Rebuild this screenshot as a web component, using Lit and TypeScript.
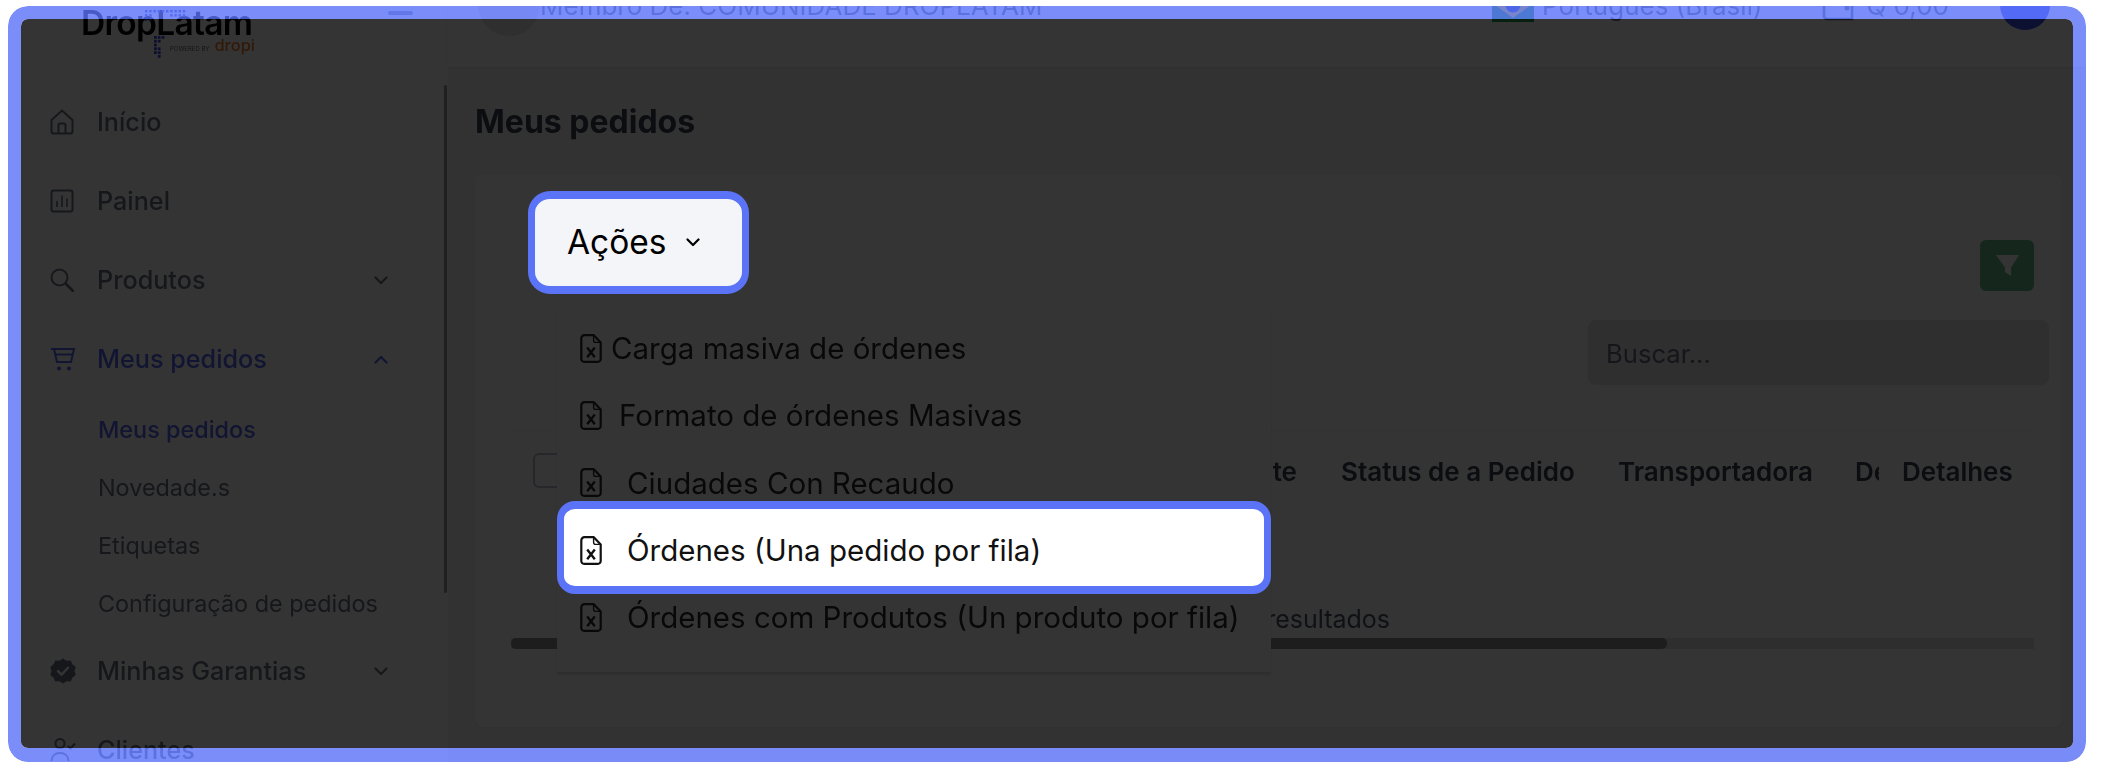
import { LitElement, html, svg, css } from "lit";
import { customElement } from "lit/decorators.js";

const chevDown = html`<svg class="chev" viewBox="0 0 14 9" width="14" height="9"><path d="M1.500 1.500 7 7l5.500-5.500" fill="none" stroke="currentColor" stroke-width="2.200" stroke-linecap="round" stroke-linejoin="round"/></svg>`;
const chevUp = html`<svg class="chev" viewBox="0 0 14 9" width="14" height="9"><path d="M1.500 7.500 7 2l5.500 5.500" fill="none" stroke="currentColor" stroke-width="2.200" stroke-linecap="round" stroke-linejoin="round"/></svg>`;
const fileX = html`<svg class="file" viewBox="0 0 22 29" width="22" height="29"><path d="M4.500 1.200h9.300l6.900 7.200v16.600a2.800 2.800 0 0 1-2.800 2.800H4.100a2.800 2.800 0 0 1-2.800-2.800V4.400a3.200 3.200 0 0 1 3.200-3.200z" fill="none" stroke="currentColor" stroke-width="2.200" stroke-linejoin="round"/><path d="M13.600 1.600v4.600a2.200 2.200 0 0 0 2.200 2.200h4.600" fill="none" stroke="currentColor" stroke-width="1.400"/><path d="M7.200 13.600l7.600 9.600M14.800 13.600l-7.600 9.600" fill="none" stroke="currentColor" stroke-width="2.400"/></svg>`;
const ic = {
  home: html`<svg class="ic" viewBox="0 0 24 26" width="24" height="26"><path d="M1.500 11 12 1.500 22.500 11v11.500a2 2 0 0 1-2 2h-17a2 2 0 0 1-2-2z" fill="none" stroke="currentColor" stroke-width="2"/><path d="M8.500 24.500V16a1.500 1.500 0 0 1 1.500-1.500h4a1.500 1.500 0 0 1 1.500 1.500v8.500" fill="none" stroke="currentColor" stroke-width="2"/></svg>`,
  chart: html`<svg class="ic" viewBox="0 0 24 24" width="24" height="24"><rect x="1.500" y="1.500" width="21" height="21" rx="2" fill="none" stroke="currentColor" stroke-width="2"/><path d="M7 18v-6M12 18V6.500M17 18v-8.500" fill="none" stroke="currentColor" stroke-width="1.600"/></svg>`,
  search: html`<svg class="ic" viewBox="0 0 24 24" width="24" height="24"><circle cx="9.500" cy="9.500" r="8" fill="none" stroke="currentColor" stroke-width="2"/><path d="m15.500 15.500 7.500 7.500" fill="none" stroke="currentColor" stroke-width="2.600" stroke-linecap="round"/></svg>`,
  cart: html`<svg class="ic" viewBox="0 0 26 24" width="26" height="24"><path d="M1 2h24M4 2l3 13h14l3-13M5.500 7.500h17" fill="none" stroke="currentColor" stroke-width="2"/><circle cx="9" cy="21.500" r="2" fill="currentColor"/><circle cx="19" cy="21.500" r="2" fill="currentColor"/></svg>`,
  badge: html`<svg class="ic" viewBox="0 0 26 26" width="26" height="26"><path d="M13 .5l3.600 2.200 4.200-.3 1.600 3.900 3.300 2.700-1.100 4 1.100 4-3.300 2.700-1.600 3.900-4.200-.3L13 25.500l-3.600-2.200-4.200.3-1.600-3.900L.3 17l1.100-4-1.100-4 3.300-2.700 1.600-3.900 4.200.3z" fill="currentColor"/><path d="m8 13.200 3.500 3.500 6.500-7" fill="none" stroke="#fff" stroke-width="2.400" stroke-linecap="round" stroke-linejoin="round"/></svg>`,
  users: html`<svg class="ic" viewBox="0 0 26 26" width="26" height="26"><circle cx="10" cy="6.500" r="4.500" fill="none" stroke="currentColor" stroke-width="2"/><path d="M1.500 24c0-5 3.500-8 8.500-8s8.500 3 8.500 8" fill="none" stroke="currentColor" stroke-width="2"/><path d="m18 9 2.500 2.500L25 6.500" fill="none" stroke="currentColor" stroke-width="2"/></svg>`,
};

function dots(rows: number[][], size: number, step: number) {
  const w = Math.max(...rows.map((r) => r.length)) * step;
  const h = rows.length * step;
  return html`<svg width=${w} height=${h} viewBox="0 0 ${w} ${h}">
    ${rows.map((r, y) => r.map((v, x) => (v ? svg`<rect x=${x * step} y=${y * step} width=${size} height=${size} fill="currentColor"></rect>` : null)))}
  </svg>`;
}

@customElement("app-root")
export class AppRoot extends LitElement {
  static styles = css`
    :host { display: block; width: 2102px; height: 772px; background: #fff; overflow: hidden; font-family: Inter, "Liberation Sans", sans-serif; }
    .viewport { position: relative; width: 2078px; height: 756px; margin: 6px 0 0 8px; overflow: hidden; border-radius: 20px; background: #fff; }
    .page { display: grid; grid-template-columns: 440px 1fr; width: 2078px; height: 756px; filter: blur(0.7px); color: #111827; }

    .sidebar { position: relative; overflow: hidden; color: #6b7280; }
    .side-head { position: relative; height: 76.5px; display: flex; justify-content: space-between; padding: 0 35px 0 73px; box-sizing: border-box; }
    .logo-word { font-size: 33.5px; font-weight: 600; letter-spacing: -0.7px; line-height: 38px; color: #000; margin-top: -2px; }
    .logo-top { position: absolute; left: 137px; top: 1px; color: #3c4fd8; }
    .logo-low { position: absolute; left: 146px; top: 30px; color: #3c4fd8; }
    .powered { position: absolute; left: 162px; top: 29px; display: flex; align-items: baseline; gap: 5px; font-size: 6px; color: #666; white-space: nowrap; }
    .powered b { font-size: 16.5px; font-weight: 500; color: #f07a2a; }
    .ham { width: 25px; height: 4px; border-radius: 2px; background: #8b93a8; margin-top: 5px; }
    .nav-row { height: 79px; display: flex; align-items: center; padding: 0 60px 0 42px; font-size: 25.2px; font-weight: 500; }
    .nav-ico { width: 47px; display: flex; }
    .nav-row .lbl { flex: 1; }
    .nav-row.active { color: #5468ee; }
    .chev { flex: none; }
    .subs { padding-top: 2px; margin-bottom: -1px; }
    .sub { height: 58px; display: flex; align-items: center; padding-left: 90px; font-size: 23.4px; color: #6b7280; }
    .sub.active { color: #5468ee; font-weight: 500; }
    .side-scroll { position: absolute; right: 1px; top: 79px; width: 3px; height: 508px; background: #9a9a9a; border-radius: 2px; }

    .main { display: flex; flex-direction: column; background: #f6f6f6; min-width: 0; }
    .topbar { height: 61px; flex: none; background: #fff; box-shadow: 0 1px 2px rgba(0,0,0,.1); }
    .topbar-in { margin-top: -32px; height: 62px; display: flex; align-items: center; padding: 0 36px 0 30px; font-size: 26px; color: #6b7280; white-space: nowrap; }
    .g-av { width: 62px; height: 62px; border-radius: 50%; background: #e6e6e6; flex: none; }
    .flag { margin: 0 8px 0 auto; flex: none; }
    .wallet { margin: 0 11px 0 60px; flex: none; }
    .b-av { width: 50px; height: 50px; margin-left: 51px; border-radius: 50%; background: #3d50f0; flex: none; }

    .content { padding: 0 24px 0 27px; flex: 1; display: flex; flex-direction: column; }
    h1 { margin: 0; height: 108px; display: flex; align-items: center; font-size: 32px; font-weight: 700; color: #374151; box-sizing: border-box; }
    .card { position: relative; height: 552px; background: #fff; border-radius: 8px; box-shadow: 0 1px 3px rgba(0,0,0,.08); padding: 65px 28px 0 36px; box-sizing: border-box; }
    .filter-row { display: flex; justify-content: flex-end; height: 51px; }
    .filter { width: 54px; height: 51px; border-radius: 6px; background: #69bd8c; display: flex; align-items: center; justify-content: center; }
    .search-row { display: flex; justify-content: flex-end; margin: 29px -15px 0 0; }
    .search { width: 461px; height: 65px; background: #e4e4e8; border-radius: 8px; box-sizing: border-box; padding: 2px 0 0 18px; display: flex; align-items: center; font-size: 25.6px; color: #6b6b80; }
    .thead { margin-top: 45px; border-top: 1px solid #f3f3f3; height: 82px; box-sizing: border-box; display: flex; align-items: center; padding-left: 22px; font-size: 26px; font-weight: 600; color: #374151; white-space: nowrap; }
    .th1 { width: 764px; display: flex; justify-content: space-between; align-items: center; }
    .check { width: 35px; height: 35px; margin-bottom: 2px; border: 2px solid #b8bcd0; border-radius: 6px; box-sizing: border-box; }
    .th-status { margin-left: 44px; width: 233px; }
    .th-trans { margin-left: 44px; width: 193px; }
    .th-de { margin-left: 44px; width: 24px; overflow: hidden; }
    .th-det { margin-left: 23px; }
    .results { margin-top: 93px; margin-left: 22px; width: 857px; text-align: right; font-size: 25px; color: #4b5563; white-space: nowrap; line-height: 28px; }
    .track { margin: 5px 0 0 0; height: 11px; background: #e0e0e0; width: 1523px; }
    .thumb { width: 1156px; height: 11px; border-radius: 5px; background: #8f8f8f; }

    .menu { position: absolute; left: 82px; top: 130px; width: 714px; height: 367px; padding-top: 9.5px; box-sizing: border-box; background: #fff; box-shadow: 0 3px 2px rgba(0,0,0,.12); color: #2b2b2b; }
    .item { height: 67.25px; display: flex; align-items: center; padding-left: 23px; font-size: 29.5px; white-space: nowrap; }
    .g1 { margin-right: 9px; } .g2 { margin-right: 17px; } .g3 { margin-right: 25px; }
    .item .g1, .item .g2, .item .g3, .hl-item .g3 { display: flex; flex: none; }

    .frame { position: absolute; inset: 0; box-sizing: border-box; border: 13px solid rgba(89, 112, 247, 0.8); border-bottom-width: 14px; border-radius: 20px; background: rgba(0, 0, 0, 0.795); background-clip: padding-box; }

    .hl { position: absolute; box-sizing: border-box; border-style: solid; border-color: #5b73f7; border-width: 8px 7px; color: #000; }
    .hl-btn { left: 520px; top: 185px; width: 221px; height: 103px; border-radius: 22px; background: #f4f5f8; display: flex; align-items: center; padding: 0 0 1px 32px; font-size: 33.5px; }
    .hl-btn .chev { margin-left: 19px; }
    .hl-item { left: 549px; top: 495px; width: 714px; height: 93px; border-radius: 18px; background: #fff; display: flex; align-items: center; padding: 5px 0 0 16px; font-size: 29.5px; white-space: nowrap; color: #111; }
  `;

  render() {
    return html`
      <div class="viewport">
        <div class="page">
          <aside class="sidebar">
            <div class="side-head">
              <div class="logo-word">DropLatam</div>
              <div class="ham"></div>
              <div class="logo-top">${dots([[1,1,1,1,1,1,1,1,1,1],[1,1,0,0,0,0,1,1,1,1],[1,1,0,0,0,0,0,0,0,0]], 2.4, 4.2)}</div>
              <div class="logo-low">${dots([[1,1,1],[1,1,0],[1,0,0],[1,1,0],[1,1,0],[0,1,0]], 2.8, 3.8)}</div>
              <div class="powered"><span>POWERED BY</span><b>dropi</b></div>
            </div>
            <nav>
              <div class="nav-row"><span class="nav-ico">${ic.home}</span><span class="lbl">Início</span></div>
              <div class="nav-row"><span class="nav-ico">${ic.chart}</span><span class="lbl">Painel</span></div>
              <div class="nav-row"><span class="nav-ico">${ic.search}</span><span class="lbl">Produtos</span>${chevDown}</div>
              <div class="nav-row active"><span class="nav-ico">${ic.cart}</span><span class="lbl">Meus pedidos</span>${chevUp}</div>
              <div class="subs">
                <div class="sub active">Meus pedidos</div>
                <div class="sub">Novedade.s</div>
                <div class="sub">Etiquetas</div>
                <div class="sub">Configuração de pedidos</div>
              </div>
              <div class="nav-row"><span class="nav-ico">${ic.badge}</span><span class="lbl">Minhas Garantias</span>${chevDown}</div>
              <div class="nav-row"><span class="nav-ico">${ic.users}</span><span class="lbl">Clientes</span></div>
            </nav>
            <div class="side-scroll"></div>
          </aside>
          <main class="main">
            <header class="topbar">
              <div class="topbar-in">
                <div class="g-av"></div>
                <span>Membro De: COMUNIDADE DROPLATAM</span>
                <svg class="flag" width="42" height="34" viewBox="0 0 42 34"><rect width="42" height="34" fill="#1e9a48"/><path d="M21 4 39 17 21 30 3 17z" fill="#f2d21c"/><circle cx="21" cy="17" r="7.500" fill="#1f3fa8"/></svg>
                <span>Português (Brasil)</span>
                <svg class="wallet" width="33" height="34" viewBox="0 0 33 34"><path d="M2 4v24a3 3 0 0 0 3 3h25V10H6" fill="none" stroke="currentColor" stroke-width="2.600"/><circle cx="25" cy="20" r="2.500" fill="currentColor"/></svg>
                <span>Q 0,00</span>
                <div class="b-av"></div>
              </div>
            </header>
            <div class="content">
              <h1>Meus pedidos</h1>
              <section class="card">
                <div class="filter-row">
                  <div class="filter"><svg width="23" height="21" viewBox="0 0 23 21"><path d="M0 0h23l-8 12.500V21l-6-4v-4.500z" fill="#fff"/></svg></div>
                </div>
                <div class="search-row"><div class="search">Buscar...</div></div>
                <div class="thead">
                  <div class="th1"><div class="check"></div><span>Cliente</span></div>
                  <div class="th-status">Status de a Pedido</div>
                  <div class="th-trans">Transportadora</div>
                  <div class="th-de">Destino</div>
                  <div class="th-det">Detalhes</div>
                </div>
                <div class="results">Mostrando 0 a 0 de 0 resultados</div>
                <div class="track"><div class="thumb"></div></div>
                <div class="menu">
                  <div class="item"><span class="g1">${fileX}</span>Carga masiva de órdenes</div>
                  <div class="item"><span class="g2">${fileX}</span>Formato de órdenes Masivas</div>
                  <div class="item"><span class="g3">${fileX}</span>Ciudades Con Recaudo</div>
                  <div class="item"><span class="g3">${fileX}</span>Órdenes (Una pedido por fila)</div>
                  <div class="item"><span class="g3">${fileX}</span>Órdenes com Produtos (Un produto por fila)</div>
                </div>
              </section>
            </div>
          </main>
        </div>
        <div class="frame"></div>
        <div class="hl hl-btn">Ações ${chevDown}</div>
        <div class="hl hl-item"><span class="g3">${fileX}</span>Órdenes (Una pedido por fila)</div>
      </div>
    `;
  }
}
